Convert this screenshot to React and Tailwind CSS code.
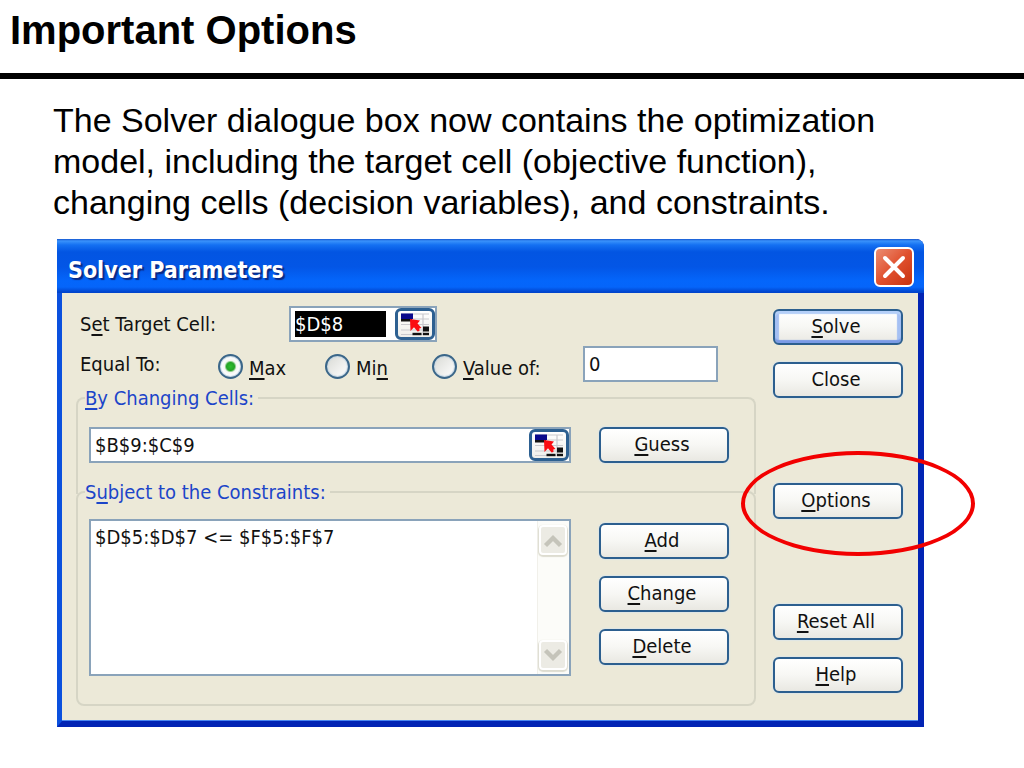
import clsx from 'clsx';

// Label text with its keyboard accelerator underlined, e.g. "S&et Target Cell:"
function Accel({ text }) {
  const at = text.indexOf('&');
  if (at < 0) return text;
  return (
    <>
      {text.slice(0, at)}
      <u className="decoration-2 underline-offset-3 [text-decoration-skip-ink:none]">{text[at + 1]}</u>
      {text.slice(at + 2)}
    </>
  );
}

function DialogButton({ label, primary }) {
  return (
    <button
      type="button"
      className={clsx(
        'block w-[130px] h-9 pr-1 pb-0.5 rounded-md border-2 border-[#2c5f8f] text-center leading-7',
        'bg-linear-to-b from-white via-[#f7f7f4] to-[#e9e8e2]',
        primary
          ? 'shadow-[inset_0_3px_1px_#b4cff8,inset_0_-3px_1px_#7b9be6,inset_4px_0_1px_#a5c0f3,inset_-4px_0_1px_#a5c0f3]'
          : 'shadow-[0_0_1px_1px_#dfe6e6]'
      )}
    >
      <Accel text={label} />
    </button>
  );
}

function RangePicker({ label }) {
  return (
    <button
      type="button"
      aria-label={label}
      className="flex items-center justify-center shrink-0 w-10 h-8 rounded-md border-3 border-[#2d6091] bg-linear-to-b from-white to-[#eeeeea]"
    >
      <svg className="shrink-0" width="30" height="24" viewBox="0 0 30 24">
        <path d="M1 7h28M1 12.500h28M1 18h28M1 22.500h28M23 2v20M1 2h28" stroke="#c9c9ce" strokeWidth="1.200" />
        <rect x="1" y="1.500" width="12" height="5.500" fill="#0a0a8c" />
        <rect x="1" y="7" width="11" height="2.500" fill="#111" />
        <rect x="23" y="14.500" width="6" height="5" fill="#111" />
        <rect x="12.500" y="20.800" width="9" height="2.400" fill="#111" />
        <rect x="23" y="20.800" width="6" height="2.400" fill="#111" />
        <path d="M10 7l10 1.500-2.500 3 4 4.500-2.200.5.2 2.500-2 .5-3.500-4.200-3.500 3.700z" fill="#fb0d12" />
      </svg>
    </button>
  );
}

function RadioOption({ label, checked, className }) {
  return (
    <label className={clsx('flex items-center gap-1.5 pt-1', className)}>
      <input
        type="radio"
        name="goal"
        defaultChecked={checked}
        className="appearance-none shrink-0 size-[25px] rounded-full border-2 border-[#3a6689] bg-linear-to-br from-[#d9dad5] to-white shadow-[inset_0_0_1px_1px_#c4d6e4] checked:bg-[radial-gradient(circle,#2fbf2f_0,#25a325_4px,#f3f5f1_6px,#ffffff_9px)]"
      />
      <span className="pt-1"><Accel text={label} /></span>
    </label>
  );
}

function ScrollArrow({ label, d }) {
  return (
    <button
      type="button"
      aria-label={label}
      className="flex items-center justify-center w-7 h-[30px] rounded-sm border-2 border-white bg-[#ecebe4] shadow-[0_1px_1px_1px_#dddcd0]"
    >
      <svg width="20" height="15" viewBox="0 0 16 12" fill="none">
        <path d={d} stroke="#c5c4ba" strokeWidth="3.500" />
      </svg>
    </button>
  );
}

const field = 'flex border-2 border-[#8aa3ba] bg-white';
const group = 'min-w-0 border-2 border-[#d6d5c5] rounded-lg pl-[11px] pr-[25px]';

function SolverDialog() {
  return (
    <section
      aria-label="Solver Parameters"
      className="rounded-tr-lg border-l-5 border-r-6 border-b-6 border-l-[#0b50de] border-r-[#0224b4] border-b-[#0224b4] bg-[#ece9d8] font-['DejaVu_Sans_Condensed','DejaVu_Sans',sans-serif] text-xl leading-7 text-[#111]"
    >
      <header className="-ml-[5px] -mr-[6px] h-[54px] pl-[11px] pr-[10px] flex items-center justify-between rounded-tr-lg bg-[linear-gradient(to_bottom,#1556cf_0,#3a92fb_2px,#1470f2_6px,#0355e2_13px,#0356e6_28px,#0466fb_42px,#0565fa_48px,#0144cc_53px)]">
        <h2 className="pt-2 text-[23px] font-bold text-white [text-shadow:2px_2px_1px_#0a2a86]">Solver Parameters</h2>
        <button
          type="button"
          aria-label="Close dialog"
          className="mt-0.5 flex items-center justify-center size-10 rounded-md border-2 border-white bg-linear-to-br from-[#ea8b70] via-[#e0502d] to-[#c8310c]"
        >
          <svg width="24" height="24" viewBox="0 0 24 24">
            <path d="M3 3l18 18M21 3L3 21" stroke="white" strokeWidth="4" strokeLinecap="round" />
          </svg>
        </button>
      </header>

      <div className="flex gap-[17px] pt-[13px] pb-3.5 pl-3.5 pr-[15px] border-b border-[#4a86f0]">
        <div className="flex-1 min-w-0">
          <div className="flex items-center pl-1">
            <label htmlFor="target" className="w-[209px]"><Accel text="S&et Target Cell:" /></label>
            <div className={clsx(field, 'w-[148px] h-9 pl-1 items-center justify-between')}>
              <input id="target" defaultValue="$D$8" className="w-[91px] h-[26px] bg-black text-white outline-none" />
              <RangePicker label="Pick target cell" />
            </div>
          </div>

          <div className="flex items-center pl-1 mt-1 mb-0.5">
            <span className="w-[138px]">Equal To:</span>
            <RadioOption label="&Max" checked className="w-[107px]" />
            <RadioOption label="Mi&n" className="w-[107px]" />
            <RadioOption label="&Value of:" className="w-[151px]" />
            <input aria-label="Value" defaultValue="0" className={clsx(field, 'w-[135px] h-9 px-1 outline-none')} />
          </div>

          <fieldset className={clsx(group, 'h-[110px] border-b-0 rounded-b-none')}>
            <legend className="-ml-1 pr-1 text-[#1c45c9]"><Accel text="&By Changing Cells:" /></legend>
            <div className="flex gap-7 pt-[15px]">
              <div className={clsx(field, 'flex-1 min-w-0 h-9 pl-1')}>
                <input aria-label="By Changing Cells" defaultValue="$B$9:$C$9" className="flex-1 min-w-0 outline-none" />
                <RangePicker label="Pick changing cells" />
              </div>
              <DialogButton label="&Guess" />
            </div>
          </fieldset>

          <fieldset className={clsx(group, '-mt-4 pb-7')}>
            <legend className="-ml-1 pr-1 text-[#1c45c9]"><Accel text="S&ubject to the Constraints:" /></legend>
            <div className="flex gap-7 pt-[13px]">
              <div className={clsx(field, 'flex-1 min-w-0 h-[157px]')}>
                <select
                  size={4}
                  aria-label="Subject to the Constraints"
                  className="appearance-none flex-1 min-w-0 pt-1 bg-white outline-none overflow-hidden"
                >
                  <option className="px-1">$D$5:$D$7 &lt;= $F$5:$F$7</option>
                </select>
                <div className="flex flex-col justify-between items-center w-8 py-1 pr-0.5 bg-[#fcfcf9] border-l border-[#f1f0ea]">
                  <ScrollArrow label="Scroll up" d="M2 10l6-6 6 6" />
                  <ScrollArrow label="Scroll down" d="M2 2l6 6 6-6" />
                </div>
              </div>
              <div className="flex flex-col gap-[17px] pt-1">
                <DialogButton label="&Add" />
                <DialogButton label="&Change" />
                <DialogButton label="&Delete" />
              </div>
            </div>
          </fieldset>
        </div>

        <div className="flex flex-col gap-[85px] pt-[3px]">
          <div className="flex flex-col gap-[17px]">
            <DialogButton label="&Solve" primary />
            <DialogButton label="Close" />
          </div>
          <div className="relative">
            <DialogButton label="&Options" />
            {/* red callout ring */}
            <div className="pointer-events-none absolute -left-8 -top-8 w-[234px] h-[105px] rounded-[50%] border-4 border-[#f20000]" />
          </div>
          <div className="flex flex-col gap-[17px]">
            <DialogButton label="&Reset All" />
            <DialogButton label="&Help" />
          </div>
        </div>
      </div>
    </section>
  );
}

export default function App() {
  return (
    <div className="min-h-screen bg-white text-black font-['Liberation_Sans',Arial,sans-serif]">
      <header className="px-2.5 pt-1.5 pb-[19px] border-b-6 border-black">
        <h1 className="text-[40px] leading-12 font-bold">Important Options</h1>
      </header>
      <main className="pl-[57px] pr-[100px] pt-[21px]">
        <p className="-ml-1 mb-4 text-[34px] leading-[41px]">
          The Solver dialogue box now contains the optimization model, including the target cell (objective function),
          changing cells (decision variables), and constraints.
        </p>
        <SolverDialog />
      </main>
    </div>
  );
}
